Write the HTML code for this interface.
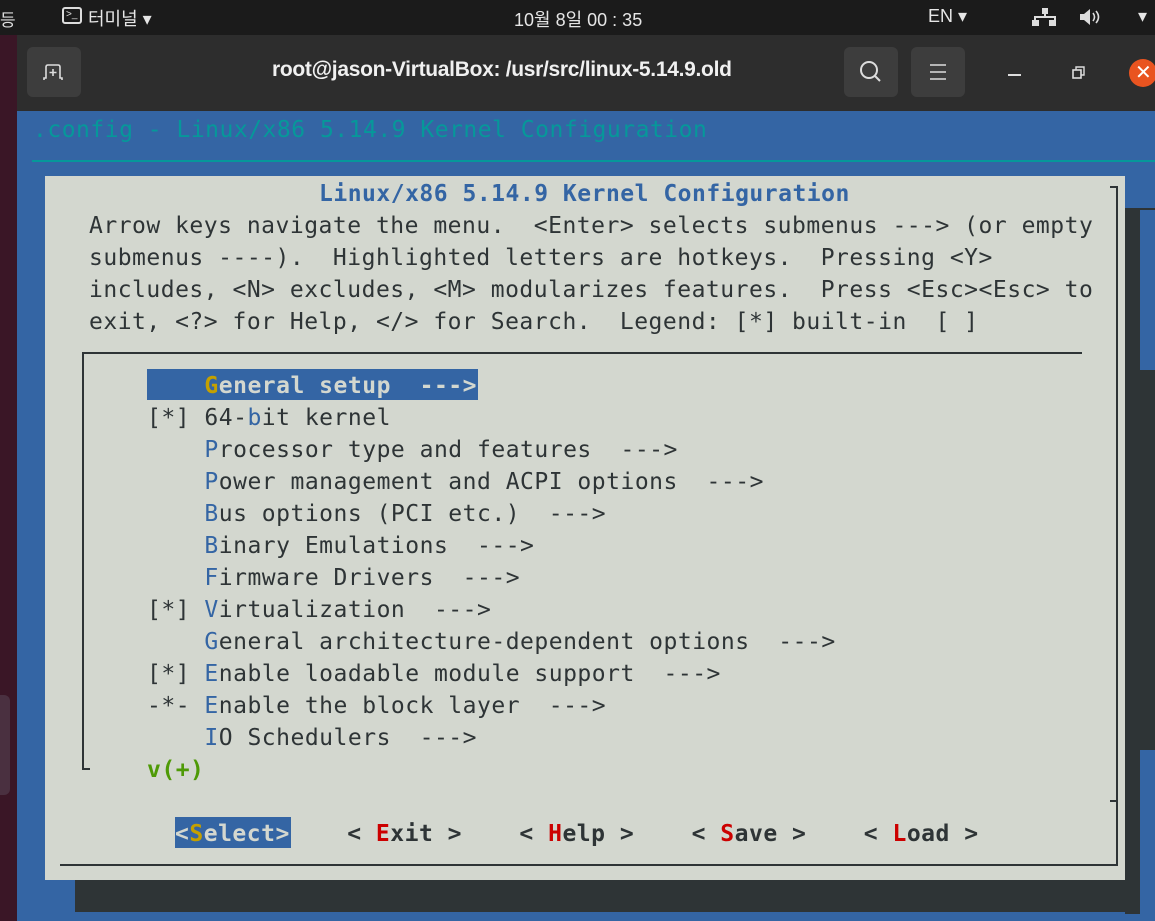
<!DOCTYPE html>
<html><head><meta charset="utf-8"><style>
*{margin:0;padding:0;box-sizing:border-box}
body{width:1155px;height:921px;overflow:hidden;background:#2d2d2d;position:relative;font-family:"Liberation Sans","Noto Sans CJK KR",sans-serif}
.abs{position:absolute}
.t{position:absolute;white-space:pre;font-family:"DejaVu Sans Mono","Liberation Mono",monospace;font-size:23px;letter-spacing:0.5px;line-height:32px;color:#2e3436}
.b{color:#3465a4}
.y{color:#c4a000}
.r{color:#cc0000}
.bold{font-weight:bold}
</style></head><body>
<div class="abs" style="left:0;top:0;width:1155px;height:35px;background:#1b1b1b"></div>
<div class="abs" style="left:0;top:6px;color:#ddd;font-size:17px">등</div>
<div class="abs" style="left:62px;top:7px;width:20px;height:17px;border:2px solid #ddd;border-radius:3px"></div>
<div class="abs" style="left:66px;top:9px;color:#ddd;font-size:10px">&gt;_</div>
<div class="abs" style="left:88px;top:5px;color:#e6e6e6;font-size:18px">터미널 ▾</div>
<div class="abs" style="left:514px;top:6px;color:#e6e6e6;font-size:18px">10월 8일 00 : 35</div>
<div class="abs" style="left:928px;top:6px;color:#e6e6e6;font-size:18px">EN ▾</div>
<svg class="abs" style="left:1030px;top:6px" width="30" height="22"><rect x="12" y="2" width="6" height="6" fill="#ddd"/><rect x="2" y="14" width="7" height="6" fill="#ddd"/><rect x="19" y="14" width="7" height="6" fill="#ddd"/><path d="M15 8v3M5 14v-3h20v3" stroke="#ddd" stroke-width="2" fill="none"/></svg>
<svg class="abs" style="left:1078px;top:6px" width="26" height="22"><path d="M2 8h4l6-5v16l-6-5H2z" fill="#ddd"/><path d="M15 7q3 4 0 8M18 5q5 6 0 12" stroke="#ddd" stroke-width="1.6" fill="none"/></svg>
<div class="abs" style="left:1138px;top:6px;color:#e6e6e6;font-size:18px">▾</div>
<div class="abs" style="left:0;top:35px;width:17px;height:886px;background:#3a1626"></div>
<div class="abs" style="left:0;top:695px;width:10px;height:100px;background:#4a3040;border-radius:0 6px 6px 0"></div>
<div class="abs" style="left:27px;top:47px;width:54px;height:50px;background:#3d3d3d;border-radius:6px"></div>
<svg class="abs" style="left:40px;top:60px" width="28" height="26"><path d="M4 20v-2h2V7q0-2 2-2h10q2 0 2 2v11h2v2" stroke="#ddd" stroke-width="1.6" fill="none"/><path d="M13 9v7M9.5 12.5h7" stroke="#ddd" stroke-width="1.6"/></svg>
<div class="abs" style="left:272px;top:58px;color:#f0f0f0;font-size:21px;font-weight:bold;letter-spacing:-0.3px">root@jason-VirtualBox: /usr/src/linux-5.14.9.old</div>
<div class="abs" style="left:844px;top:47px;width:54px;height:50px;background:#3d3d3d;border-radius:6px"></div>
<svg class="abs" style="left:858px;top:59px" width="26" height="26"><circle cx="11" cy="11" r="8" stroke="#ddd" stroke-width="2" fill="none"/><path d="M17 17l5 5" stroke="#ddd" stroke-width="2"/></svg>
<div class="abs" style="left:911px;top:47px;width:54px;height:50px;background:#3d3d3d;border-radius:6px"></div>
<svg class="abs" style="left:928px;top:62px" width="20" height="20"><path d="M2 3h16M2 10h16M2 17h16" stroke="#ddd" stroke-width="1.6"/></svg>
<div class="abs" style="left:1008px;top:74px;width:13px;height:2px;background:#ddd"></div>
<svg class="abs" style="left:1071px;top:65px" width="16" height="16"><rect x="2" y="5" width="8" height="8" stroke="#ddd" stroke-width="1.6" fill="none"/><path d="M5 5V2h8v8h-3" stroke="#ddd" stroke-width="1.4" fill="none"/></svg>
<div class="abs" style="left:1129px;top:59px;width:28px;height:28px;background:#e95420;border-radius:50%"></div>
<div class="abs" style="left:1135px;top:60px;color:#fff;font-size:20px">✕</div>
<div class="abs" style="left:17px;top:111px;width:1138px;height:810px;background:#3465a4"></div>
<div class="t" style="left:33px;top:114px;color:#06989a">.config - Linux/x86 5.14.9 Kernel Configuration</div>
<div class="abs" style="left:32px;top:160px;width:1123px;height:2px;background:#06989a"></div>
<div class="abs" style="left:1125px;top:208px;width:30px;height:706px;background:#2e3436"></div>
<div class="abs" style="left:75px;top:880px;width:1065px;height:32px;background:#2e3436"></div>
<div class="abs" style="left:1140px;top:210px;width:15px;height:160px;background:#3465a4"></div>
<div class="abs" style="left:1140px;top:750px;width:15px;height:171px;background:#3465a4"></div>
<div class="abs" style="left:45px;top:176px;width:1080px;height:704px;background:#d3d7cf"></div>
<div class="abs" style="left:60px;top:864px;width:1058px;height:2px;background:#2e3436"></div>
<div class="abs" style="left:1116px;top:186px;width:2px;height:680px;background:#2e3436"></div>
<div class="abs" style="left:1110px;top:186px;width:8px;height:2px;background:#2e3436"></div>
<div class="abs" style="left:1110px;top:800px;width:8px;height:2px;background:#2e3436"></div>
<div class="t bold b" style="left:319px;top:178px">Linux/x86 5.14.9 Kernel Configuration</div>
<div class="t" style="left:89px;top:210px">Arrow keys navigate the menu.  &lt;Enter&gt; selects submenus ---&gt; (or empty
submenus ----).  Highlighted letters are hotkeys.  Pressing &lt;Y&gt;
includes, &lt;N&gt; excludes, &lt;M&gt; modularizes features.  Press &lt;Esc&gt;&lt;Esc&gt; to
exit, &lt;?&gt; for Help, &lt;/&gt; for Search.  Legend: [*] built-in  [ ]</div>
<div class="abs" style="left:82px;top:352px;width:1000px;height:2px;background:#2e3436"></div>
<div class="abs" style="left:82px;top:352px;width:2px;height:418px;background:#2e3436"></div>
<div class="abs" style="left:82px;top:768px;width:8px;height:2px;background:#2e3436"></div>
<div class="abs" style="left:147px;top:369px;width:331px;height:31px;background:#3465a4"></div>
<div class="t" style="left:147px;top:370px"><span style="color:#d3d7cf" class="bold">    <span class="y">G</span>eneral setup  ---&gt;</span>
[*] 64-<span class="b">b</span>it kernel
    <span class="b">P</span>rocessor type and features  ---&gt;
    <span class="b">P</span>ower management and ACPI options  ---&gt;
    <span class="b">B</span>us options (PCI etc.)  ---&gt;
    <span class="b">B</span>inary Emulations  ---&gt;
    <span class="b">F</span>irmware Drivers  ---&gt;
[*] <span class="b">V</span>irtualization  ---&gt;
    <span class="b">G</span>eneral architecture-dependent options  ---&gt;
[*] <span class="b">E</span>nable loadable module support  ---&gt;
-*- <span class="b">E</span>nable the block layer  ---&gt;
    <span class="b">I</span>O Schedulers  ---&gt;
<span class="bold" style="color:#4e9a06">v(+)</span></div>
<div class="abs" style="left:175px;top:817px;width:116px;height:31px;background:#3465a4"></div>
<div class="t bold" style="left:175px;top:818px"><span style="color:#d3d7cf">&lt;<span class="y">S</span>elect&gt;</span>    &lt; <span class="r">E</span>xit &gt;    &lt; <span class="r">H</span>elp &gt;    &lt; <span class="r">S</span>ave &gt;    &lt; <span class="r">L</span>oad &gt;</div>
</body></html>
